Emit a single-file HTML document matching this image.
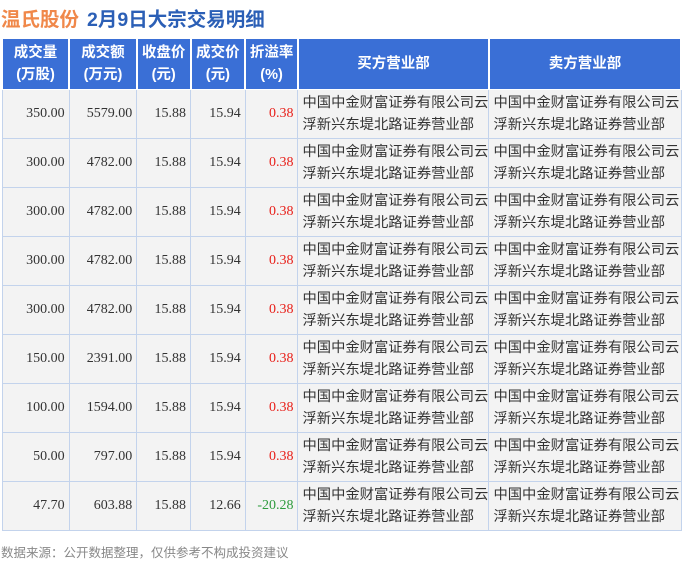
<html><head><style>
body{margin:0;width:682px;height:561px;background:#fff;font-family:"Liberation Sans","Noto Sans CJK SC",sans-serif;position:relative;overflow:hidden}
.t{position:absolute;top:3px;left:1px;font-size:19.5px;font-weight:bold;letter-spacing:0}
.t .a{color:#f0884a}.t .b{color:#2b5fb6;margin-left:8px}
table{position:absolute;left:2px;top:38px;border-collapse:collapse;table-layout:fixed}
td,th{border:1px solid #c3d3ec;padding:0;box-sizing:border-box}
th{background:#3a6fd6;color:#fff;font-weight:bold;font-size:14.5px;height:51px;line-height:22px;border-color:#fff;border-right:2px solid #fff}
tr.d{height:49px}
td{background:#f3f3f3;font-size:14px}
td.n{text-align:right;padding-right:4px;font-family:"Liberation Serif","DejaVu Serif",serif;color:#333}
td.r{color:#e8201a}td.g{color:#2e9b3d}
td.c{font-size:14.3px;color:#333;line-height:22px;padding-left:4px;white-space:nowrap;overflow:hidden}
.f{position:absolute;left:1px;top:542px;font-size:12.5px;color:#888}
</style></head><body>
<div class="t"><span class="a">温氏股份</span><span class="b">2月9日大宗交易明细</span></div>
<table>
<colgroup><col style="width:67px"><col style="width:68px"><col style="width:54px"><col style="width:55px"><col style="width:53px"><col style="width:191px"><col style="width:192px"></colgroup>
<tr><th>成交量<br>(万股)</th><th>成交额<br>(万元)</th><th>收盘价<br>(元)</th><th>成交价<br>(元)</th><th>折溢率<br>(%)</th><th>买方营业部</th><th>卖方营业部</th></tr>
<tr class="d"><td class="n">350.00</td><td class="n">5579.00</td><td class="n">15.88</td><td class="n">15.94</td><td class="n r">0.38</td><td class="c">中国中金财富证券有限公司云<br>浮新兴东堤北路证券营业部</td><td class="c">中国中金财富证券有限公司云<br>浮新兴东堤北路证券营业部</td></tr>
<tr class="d"><td class="n">300.00</td><td class="n">4782.00</td><td class="n">15.88</td><td class="n">15.94</td><td class="n r">0.38</td><td class="c">中国中金财富证券有限公司云<br>浮新兴东堤北路证券营业部</td><td class="c">中国中金财富证券有限公司云<br>浮新兴东堤北路证券营业部</td></tr>
<tr class="d"><td class="n">300.00</td><td class="n">4782.00</td><td class="n">15.88</td><td class="n">15.94</td><td class="n r">0.38</td><td class="c">中国中金财富证券有限公司云<br>浮新兴东堤北路证券营业部</td><td class="c">中国中金财富证券有限公司云<br>浮新兴东堤北路证券营业部</td></tr>
<tr class="d"><td class="n">300.00</td><td class="n">4782.00</td><td class="n">15.88</td><td class="n">15.94</td><td class="n r">0.38</td><td class="c">中国中金财富证券有限公司云<br>浮新兴东堤北路证券营业部</td><td class="c">中国中金财富证券有限公司云<br>浮新兴东堤北路证券营业部</td></tr>
<tr class="d"><td class="n">300.00</td><td class="n">4782.00</td><td class="n">15.88</td><td class="n">15.94</td><td class="n r">0.38</td><td class="c">中国中金财富证券有限公司云<br>浮新兴东堤北路证券营业部</td><td class="c">中国中金财富证券有限公司云<br>浮新兴东堤北路证券营业部</td></tr>
<tr class="d"><td class="n">150.00</td><td class="n">2391.00</td><td class="n">15.88</td><td class="n">15.94</td><td class="n r">0.38</td><td class="c">中国中金财富证券有限公司云<br>浮新兴东堤北路证券营业部</td><td class="c">中国中金财富证券有限公司云<br>浮新兴东堤北路证券营业部</td></tr>
<tr class="d"><td class="n">100.00</td><td class="n">1594.00</td><td class="n">15.88</td><td class="n">15.94</td><td class="n r">0.38</td><td class="c">中国中金财富证券有限公司云<br>浮新兴东堤北路证券营业部</td><td class="c">中国中金财富证券有限公司云<br>浮新兴东堤北路证券营业部</td></tr>
<tr class="d"><td class="n">50.00</td><td class="n">797.00</td><td class="n">15.88</td><td class="n">15.94</td><td class="n r">0.38</td><td class="c">中国中金财富证券有限公司云<br>浮新兴东堤北路证券营业部</td><td class="c">中国中金财富证券有限公司云<br>浮新兴东堤北路证券营业部</td></tr>
<tr class="d"><td class="n">47.70</td><td class="n">603.88</td><td class="n">15.88</td><td class="n">12.66</td><td class="n g">-20.28</td><td class="c">中国中金财富证券有限公司云<br>浮新兴东堤北路证券营业部</td><td class="c">中国中金财富证券有限公司云<br>浮新兴东堤北路证券营业部</td></tr>
</table>
<div class="f">数据来源：公开数据整理，仅供参考不构成投资建议</div>
</body></html>
